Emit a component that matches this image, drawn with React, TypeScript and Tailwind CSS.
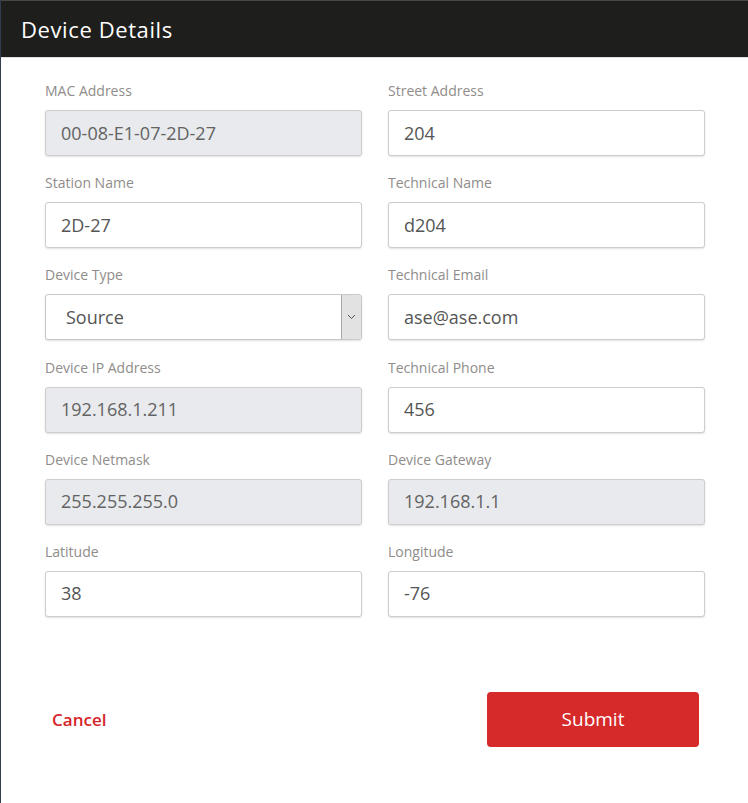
import React from "react";

type Field = { label: string; value: string; disabled?: boolean; select?: boolean };

const left: Field[] = [
  { label: "MAC Address", value: "00-08-E1-07-2D-27", disabled: true },
  { label: "Station Name", value: "2D-27" },
  { label: "Device Type", value: "Source", select: true },
  { label: "Device IP Address", value: "192.168.1.211", disabled: true },
  { label: "Device Netmask", value: "255.255.255.0", disabled: true },
  { label: "Latitude", value: "38" },
];

const right: Field[] = [
  { label: "Street Address", value: "204" },
  { label: "Technical Name", value: "d204" },
  { label: "Technical Email", value: "ase@ase.com" },
  { label: "Technical Phone", value: "456" },
  { label: "Device Gateway", value: "192.168.1.1", disabled: true },
  { label: "Longitude", value: "-76" },
];

function FieldBox({ f }: { f: Field }) {
  return (
    <div className="flex flex-col">
      <div className="text-[14px] leading-[21px] text-[#8f8c8a] mb-[9px]">{f.label}</div>
      {f.select ? (
        <div className="h-[46px] flex items-stretch border border-[#c8c8c8] rounded-[3px] bg-white shadow-[0_1px_2px_rgba(0,0,0,0.12)] overflow-hidden">
          <div className="flex-1 flex items-center pl-[20px] text-[18px] text-[#555]">{f.value}</div>
          <div className="w-[20px] flex items-center justify-center bg-[#e2e2e2] border-l border-[#a8a8a8]">
            <svg width="9" height="6" viewBox="0 0 9 6">
              <path d="M1 1 L4.5 4.5 L8 1" fill="none" stroke="#555" strokeWidth="1" />
            </svg>
          </div>
        </div>
      ) : (
        <div
          className={
            "h-[46px] flex items-center pl-[15px] text-[18px] border border-[#cdcdcd] rounded-[3px] shadow-[0_1px_2px_rgba(0,0,0,0.12)] " +
            (f.disabled ? "bg-[#e8eaed] text-[#636363]" : "bg-white text-[#555]")
          }
        >
          {f.value}
        </div>
      )}
    </div>
  );
}

export default function App() {
  return (
    <div
      className="w-[748px] h-[803px] bg-white border-l border-[#2e3e4c] flex flex-col"
      style={{ fontFamily: '"Open Sans", "Liberation Sans", sans-serif' }}
    >
      <div className="h-[58px] bg-[#1e1e1c] border-t border-[#4a4646] border-b border-b-[#e2e2e2] flex items-center pl-[20px]">
        <span className="text-[22px] tracking-[0.6px] text-white leading-none">Device Details</span>
      </div>
      <div className="pt-[22px] pl-[44px] pr-[43px] grid grid-cols-2 gap-x-[26px]">
        <div className="flex flex-col gap-[16.2px]">
          {left.map((f) => (
            <FieldBox key={f.label} f={f} />
          ))}
        </div>
        <div className="flex flex-col gap-[16.2px]">
          {right.map((f) => (
            <FieldBox key={f.label} f={f} />
          ))}
        </div>
      </div>
      <div className="mt-[75px] flex items-center justify-between pl-[51px] pr-[49px]">
        <span className="text-[17px] font-semibold text-[#d4262a]">Cancel</span>
        <button className="w-[212px] h-[55px] rounded-[4px] bg-[#d6292a] text-white text-[19px]">
          Submit
        </button>
      </div>
    </div>
  );
}
